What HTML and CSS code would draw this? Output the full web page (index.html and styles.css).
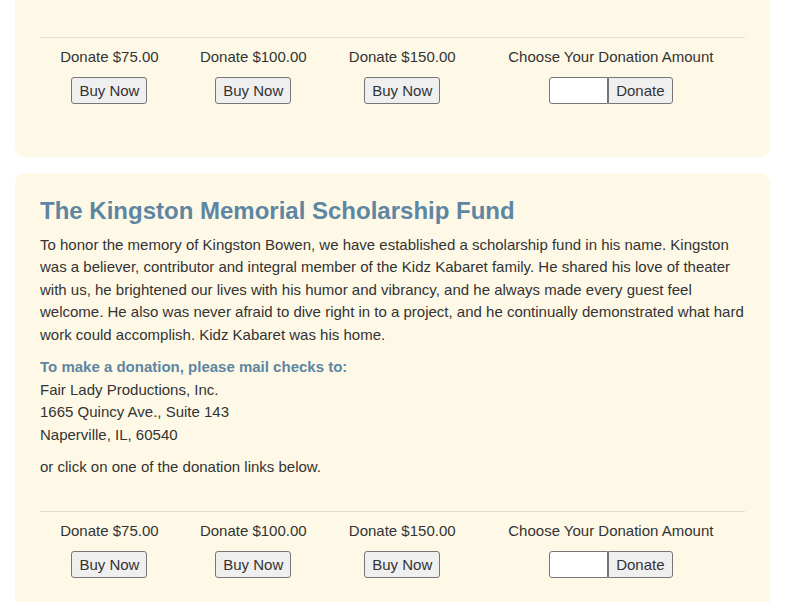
FILE: index.html
```html
<!DOCTYPE html>
<html>
<head>
<meta charset="utf-8">
<link rel="stylesheet" href="styles.css">
</head>
<body>
<div class="page">
  <section class="card card-cut">
    <hr class="rule">
    <table class="donate">
      <tr>
        <td>Donate $75.00</td>
        <td>Donate $100.00</td>
        <td>Donate $150.00</td>
        <td>Choose Your Donation Amount</td>
      </tr>
      <tr>
        <td><button class="btn">Buy Now</button></td>
        <td><button class="btn">Buy Now</button></td>
        <td><button class="btn">Buy Now</button></td>
        <td><span class="custom"><input class="amount" type="text"><button class="btn">Donate</button></span></td>
      </tr>
    </table>
  </section>
  <section class="card">
    <h2 class="title">The Kingston Memorial Scholarship Fund</h2>
    <p class="text">To honor the memory of Kingston Bowen, we have established a scholarship fund in his name. Kingston was a believer, contributor and integral member of the Kidz Kabaret family. He shared his love of theater with us, he brightened our lives with his humor and vibrancy, and he always made every guest feel welcome. He also was never afraid to dive right in to a project, and he continually demonstrated what hard work could accomplish. Kidz Kabaret was his home.</p>
    <p class="text"><strong class="label">To make a donation, please mail checks to:</strong><br>Fair Lady Productions, Inc.<br>1665 Quincy Ave., Suite 143<br>Naperville, IL, 60540</p>
    <p class="text">or click on one of the donation links below.</p>
    <hr class="rule">
    <table class="donate">
      <tr>
        <td>Donate $75.00</td>
        <td>Donate $100.00</td>
        <td>Donate $150.00</td>
        <td>Choose Your Donation Amount</td>
      </tr>
      <tr>
        <td><button class="btn">Buy Now</button></td>
        <td><button class="btn">Buy Now</button></td>
        <td><button class="btn">Buy Now</button></td>
        <td><span class="custom"><input class="amount" type="text"><button class="btn">Donate</button></span></td>
      </tr>
    </table>
  </section>
</div>
</body>
</html>
```
FILE: styles.css
```css
html, body {
  margin: 0;
  padding: 0;
  background: #ffffff;
}
body {
  font-family: "Liberation Sans", Arial, sans-serif;
  font-size: 15px;
  line-height: 1.5;
  color: #333333;
  overflow: hidden;
}
.page {
  padding: 0 15px;
  display: flex;
  flex-direction: column;
  gap: 16px;
}
.card {
  background: #fef9e7;
  border-radius: 10px;
  padding: 23px 25px 53px;
}
.card-cut {
  margin-top: -20px;
  padding-top: 57px;
  padding-bottom: 52.5px;
}
.title {
  margin: 0 0 9px;
  font-size: 24px;
  line-height: 29px;
  font-weight: bold;
  color: #5d86a2;
}
.text {
  margin: 0 0 10px;
}
.label {
  color: #5d86a2;
}
.rule {
  border: 0;
  border-top: 1px solid #e3dfcf;
  margin: 32px 0 0;
}
.card-cut .rule {
  margin-top: 0;
}
.donate {
  width: 100%;
  border-collapse: collapse;
  margin-top: 8px;
}
.donate td {
  text-align: center;
  padding: 0 8px;
  height: 22px;
}
.donate tr + tr td {
  padding-top: 8.5px;
}
.btn {
  font-family: "Liberation Sans", Arial, sans-serif;
  font-size: 15px;
  line-height: 17px;
  color: #333;
  background: #efefef;
  border: 1px solid #767676;
  border-radius: 3px;
  padding: 4px 7px;
  margin: 0;
  vertical-align: top;
}
.custom {
  display: inline-flex;
}
.amount {
  width: 59px;
  height: 27px;
  box-sizing: border-box;
  border: 1px solid #767676;
  border-radius: 3px 0 0 3px;
  background: #fff;
  margin: 0;
  padding: 1px 2px;
}
.custom .btn {
  border-radius: 0 3px 3px 0;
}
```
